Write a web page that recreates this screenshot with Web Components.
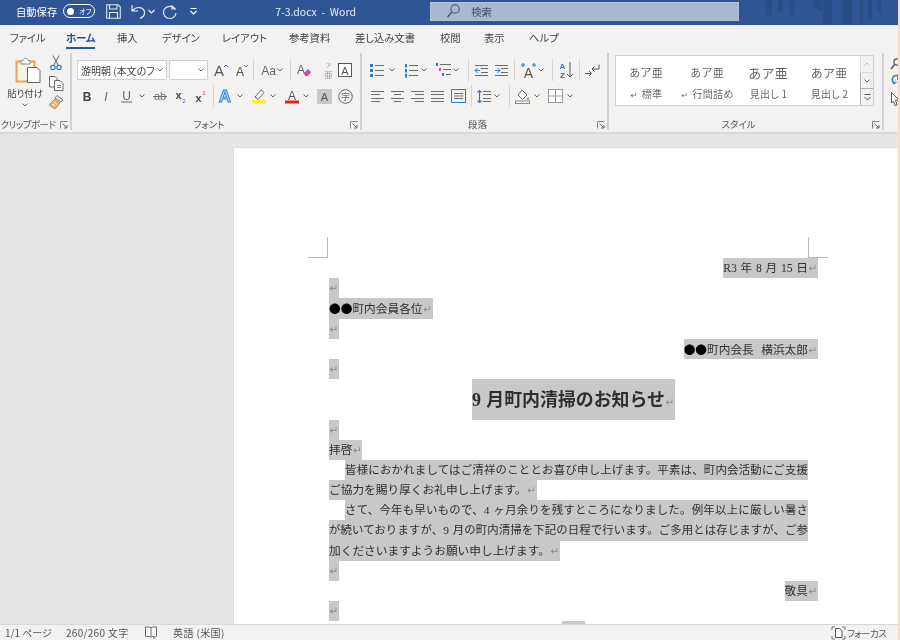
<!DOCTYPE html>
<html lang="ja">
<head>
<meta charset="utf-8">
<title>7-3.docx - Word</title>
<style>
  html, body { margin: 0; height: 100%; overflow: hidden; background: #f8dcc6; }
  body { font-family: "Noto Sans CJK JP", sans-serif; }
  .dot { font-family: "Noto Sans CJK JP", sans-serif; color: #000; }
</style>
</head>
<body>
<word-app>
  <title-bar></title-bar>
  <ribbon-tabs></ribbon-tabs>
  <word-ribbon></word-ribbon>
  <doc-area>
    <doc-page>
      <doc-line align="right">R3 年 8 月 15 日</doc-line>
      <doc-line></doc-line>
      <doc-line><span class="dot">●●</span>町内会員各位</doc-line>
      <doc-line></doc-line>
      <doc-line align="right"><span class="dot">●●</span>町内会長&nbsp;&nbsp;横浜太郎</doc-line>
      <doc-line></doc-line>
      <doc-line align="center" big>9 月町内清掃のお知らせ</doc-line>
      <doc-line></doc-line>
      <doc-line>拝啓</doc-line>
      <doc-line fill indent nomark>皆様におかれましてはご清祥のこととお喜び申し上げます。平素は、町内会活動にご支援</doc-line>
      <doc-line>ご協力を賜り厚くお礼申し上げます。</doc-line>
      <doc-line fill indent nomark>さて、今年も早いもので、4 ヶ月余りを残すところになりました。例年以上に厳しい暑さ</doc-line>
      <doc-line fill nomark>が続いておりますが、9 月の町内清掃を下記の日程で行います。ご多用とは存じますが、ご参</doc-line>
      <doc-line>加くださいますようお願い申し上げます。</doc-line>
      <doc-line></doc-line>
      <doc-line align="right">敬具</doc-line>
      <doc-line></doc-line>
      <doc-line align="center" nomark>　　</doc-line>
    </doc-page>
  </doc-area>
  <status-bar></status-bar>
</word-app>

<script>
const UI_FONT = '"Noto Sans CJK JP", sans-serif'
const G = '#6c6c6c'
const B = '#2b7cd3'
const line = (x1, y1, x2, y2, c = G, w = 1) => `<path d="M${x1} ${y1}L${x2} ${y2}" stroke="${c}" stroke-width="${w}" fill="none"/>`
const hl = (x1, x2, ys, c = G) => ys.map(y => line(x1, y, x2, y, c)).join('')
const txt = (x, y, s, t, attrs = '') => `<text x="${x}" y="${y}" font-size="${s}" font-family="Liberation Sans" text-anchor="middle" ${attrs}>${t}</text>`

// name: [width, height, svg]
const ICONS = {
  chev: [6, 4, `<path d="M.5 .5L3 3L5.5 .5" fill="none" stroke="#666" stroke-width="1"/>`],
  cut: [12, 16, `<path d="M3 .5L8 10M9 .5L4 10" stroke="#666" fill="none"/><circle cx="3" cy="12.5" r="2.2" fill="none" stroke="${B}" stroke-width="1.2"/><circle cx="9" cy="12.5" r="2.2" fill="none" stroke="${B}" stroke-width="1.2"/>`],
  copy: [15, 15, `<path d="M.5 .5H6L8 2.5V11H.5Z" fill="#fff" stroke="#666"/><path d="M5.5 4.5H11L14 7.5V14.5H5.5Z" fill="#fff" stroke="#666"/>${hl(8, 12, [9.5, 11.5], '#777')}`],
  painter: [16, 15, `<path d="M9 .5L15 5L13 7L7 3Z" fill="#eee" stroke="#777"/><path d="M7 4L12 8L7 14L1 10Z" fill="#f0b062" stroke="#dc8a2f"/><path d="M4 9L7 11M6 7L9 9.5" stroke="#fff"/>`],
  paste: [26, 26, `<rect x="1.5" y="4.5" width="18" height="20" fill="#f7f3ec" stroke="#e5a35a" stroke-width="2"/><path d="M6 3.5H8C8 .5 13 .5 13 3.5H15V7H6Z" fill="#fff" stroke="#8a8a8a"/><path d="M12.5 10.5H22L25 13.5V25.5H12.5Z" fill="#fff" stroke="#666"/>`],
  launcher: [8, 8, `<path d="M.5 7.5V.5H7.5" fill="none" stroke="#888"/><path d="M2.5 2.5L7 7M7 4V7H4" fill="none" stroke="#666"/>`],
  growA: [15, 14, `${txt(6, 13, 15, 'A', 'fill="#555"')}<path d="M11 4L13 2L15 4" fill="none" stroke="${B}"/>`],
  shrinkA: [14, 14, `${txt(6, 13, 12, 'A', 'fill="#555"')}<path d="M10 2L12 4L14 2" fill="none" stroke="${B}"/>`],
  aa: [17, 14, `${txt(8.5, 12, 12, 'Aa', 'fill="#666"')}`],
  clear: [16, 16, `${txt(5, 12, 12, 'A', 'fill="#666"')}<path d="M8 11L12 7L15 10L12 14H9Z" fill="#d04a9c"/>`],
  ruby: [13, 17, `<text x="6.5" y="4.5" font-size="5" text-anchor="middle" fill="#777" font-family="Noto Sans CJK JP">ア</text><text x="6.5" y="16" font-size="8.5" text-anchor="middle" fill="#999" font-family="Noto Sans CJK JP">亜</text>`],
  boxA: [14, 14, `<rect x=".5" y=".5" width="13" height="13" fill="#fff" stroke="#555"/>${txt(7, 11.5, 11, 'A', 'fill="#555"')}`],
  bold: [10, 12, txt(5, 11, 12, 'B', 'fill="#444" font-weight="bold"')],
  italic: [10, 12, txt(5, 11, 12, 'I', 'fill="#666" font-style="italic" font-family="Liberation Serif"')],
  under: [11, 14, `${txt(5.5, 10.5, 12, 'U', 'fill="#666"')}${line(0, 13, 11, 13)}`],
  strike: [14, 12, `${txt(7, 10, 11, 'ab', 'fill="#777"')}${line(0, 6.5, 14, 6.5)}`],
  sub: [12, 13, `${txt(4.5, 9, 11, 'x', 'fill="#444" font-weight="bold"')}${txt(10, 13, 6, '2', `fill="${B}"`)}`],
  sup: [12, 13, `${txt(4.5, 12, 11, 'x', 'fill="#444" font-weight="bold"')}${txt(10, 5, 6, '2', `fill="#d04a9c"`)}`],
  effectA: [14, 14, txt(7, 13, 17, 'A', `fill="#bcd8f2" stroke="${B}" stroke-width=".9" font-weight="bold"`)],
  marker: [14, 14, `<path d="M3 8L9 1L12 3.5L6 10.5Z" fill="#fff" stroke="#666"/><rect y="11" width="14" height="3.5" fill="#f6ef3c"/>`],
  colorA: [14, 15, `${txt(7, 10.5, 12, 'A', 'fill="#555"')}<rect y="11.5" width="14" height="3" fill="#e81f24"/>`],
  shadeA: [15, 15, `<rect width="15" height="15" fill="#c9c9c9"/>${txt(7.5, 12, 11, 'A', 'fill="#555"')}`],
  circled: [15, 15, `<circle cx="7.5" cy="7.5" r="6.8" fill="none" stroke="#666"/><text x="7.5" y="11" font-size="9" text-anchor="middle" fill="#666" font-family="Noto Sans CJK JP">字</text>`],
  bullets: [14, 13, `${[1.5, 6.5, 11.5].map(y => `<rect x="0" y="${y - 1.5}" width="3" height="3" fill="${B}"/>`).join('')}${hl(5, 14, [1.5, 6.5, 11.5])}`],
  numbers: [14, 13, `${[2, 7, 12].map(y => `<rect x="1" y="${y - 2}" width="2" height="3.5" fill="${B}"/>`).join('')}${hl(5, 14, [1.5, 6.5, 11.5])}`],
  multi: [15, 14, `<rect x="0" y="0" width="2" height="3" fill="${B}"/><rect x="3" y="5" width="2" height="3" fill="#d04a9c"/><rect x="6" y="10" width="2" height="3" fill="${B}"/>${line(4, 1.5, 15, 1.5)}${line(7, 6.5, 15, 6.5)}${line(10, 11.5, 15, 11.5)}`],
  outdent: [13, 11, `${hl(0, 13, [.5, 10.5])}${hl(6, 13, [3.5, 7.5])}<path d="M0 5.5H5M2.5 3L0 5.5L2.5 8" fill="none" stroke="${B}"/>`],
  indent: [13, 11, `${hl(0, 13, [.5, 10.5])}${hl(6, 13, [3.5, 7.5])}<path d="M0 5.5H5M2.5 3L5 5.5L2.5 8" fill="none" stroke="${B}"/>`],
  asian: [17, 15, `${txt(8.5, 14.5, 14, 'A', 'fill="#555"')}<path d="M1 2H5M3 0V4M12 2H16M14 0V4" stroke="${B}" stroke-width="1.2"/>`],
  sort: [15, 16, `${txt(4.5, 7, 8, 'A', `fill="${B}" font-weight="bold"`)}${txt(4.5, 15.5, 8, 'Z', 'fill="#555" font-weight="bold"')}<path d="M12 0V15M9 12L12 15L15 12" stroke="#555" fill="none"/>`],
  ltr: [15, 13, `<path d="M14 .5V5H7M9.5 2.5L7 5L9.5 7.5" stroke="#555" fill="none"/><path d="M0 9.5H6M4 7L6.5 9.5L4 12" stroke="#555" fill="none"/>`],
  alignL: [13, 11, hl(0, 13, [.5, 7.5]) + hl(0, 9, [3.5, 10.5])],
  alignC: [13, 11, hl(0, 13, [.5, 7.5]) + hl(3, 10, [3.5, 10.5])],
  alignR: [13, 11, hl(0, 13, [.5, 7.5]) + hl(4, 13, [3.5, 10.5])],
  justify: [13, 11, hl(0, 13, [.5, 3.5, 7.5, 10.5])],
  dist: [15, 14, `<path d="M.5 0V14M14.5 0V14" stroke="${B}"/>` + hl(1, 14, [.5, 13.5], B) + hl(3, 12, [4.5, 7, 9.5])],
  spacing: [14, 13, `<path d="M2.5 0V13M.5 2.5L2.5 .5L4.5 2.5M.5 10.5L2.5 12.5L4.5 10.5" fill="none" stroke="${B}" stroke-width="1.2"/>${hl(6, 14, [1.5, 4.5, 8.5, 11.5])}`],
  shade: [15, 15, `<path d="M7 1L12 6L7.5 10.5L3 6Z" fill="#fff" stroke="#666"/><path d="M13 8C14.5 10 14 11 13 11S11.5 10 13 8Z" fill="#59a14f"/><rect x=".5" y="12" width="14" height="2.5" fill="#fff" stroke="#888"/>`],
  borders: [15, 14, `<rect x=".5" y=".5" width="14" height="13" fill="#fff" stroke="#999"/><path d="M7.5 .5V13.5M.5 7H14.5" stroke="#999"/>`],
  find: [9, 12, `<circle cx="6" cy="4" r="3.2" fill="none" stroke="#555" stroke-width="1.2"/><path d="M3.5 6.5L0 11" stroke="#555" stroke-width="1.5"/>`],
  replace: [9, 14, `<path d="M6 1.5C1 1 0 7 3 9M1 7L3 9.5L5.5 8" fill="none" stroke="${B}" stroke-width="1.4"/><rect x="6" y="0" width="3" height="6" fill="#b06ac0"/>`],
  cursor: [9, 14, `<path d="M.5 .5L8 8H4.5L6 13L4 13.5L2.5 9L.5 11Z" fill="#fff" stroke="#555"/>`],
  save: [15, 15, `<path d="M.7 .7H12L14.3 3V14.3H.7Z" fill="none" stroke="#dfe6f1" stroke-width="1.1"/><path d="M3.5 .7V5H11V.7M3.5 14.3V8.5H11.5V14.3" fill="none" stroke="#dfe6f1" stroke-width="1.1"/>`],
  undo: [15, 15, `<path d="M1 1V7H7M1.5 6.8C5 2 12.5 2.5 13.5 8C14 11 12 13 9 14.5" fill="none" stroke="#e7ecf5" stroke-width="1.2"/>`],
  redo: [15, 15, `<path d="M10 1V5H14M13 4.5C9 .5 2.5 2.5 1.5 7.5C1 11 4 14.5 7.5 14.5C11 14.5 13.5 12 14 9" fill="none" stroke="#e7ecf5" stroke-width="1.2"/>`],
  chevW: [7, 5, `<path d="M.5 1L3.5 4L6.5 1" fill="none" stroke="#fff" stroke-width="1.1"/>`],
  qat: [7, 7, `<path d="M.5 .5H6.5M.5 3L3.5 6L6.5 3" fill="none" stroke="#fff" stroke-width="1.1"/>`],
  more: [7, 7, `<path d="M.5 .5H6.5M.5 3L3.5 6L6.5 3" fill="none" stroke="#555" stroke-width="1"/>`],
  search: [13, 14, `<circle cx="8" cy="5" r="4.2" fill="none" stroke="#3d4e68" stroke-width="1.1"/><path d="M5 8L.5 13" stroke="#3d4e68" stroke-width="1.2"/>`],
  book: [12, 13, `<path d="M.5 1H5L6 2L7 1H11.5V10L9 12.5V10.5H7L6 11.5L5 10.5H.5ZM6 2V11" fill="#fff" stroke="#666"/>`],
  focus: [13, 14, `<path d="M0 4V1H3M10 1H13V4M0 10V13H3M10 13H13V10" fill="none" stroke="#777"/><path d="M3.5 2.5H7.5L10 5V11.5H3.5Z" fill="#fff" stroke="#555"/>`]
}

// small svg icon in a fixed width cell
class RIcon extends HTMLElement {
  constructor() {
    super()
    this.attachShadow({ mode: 'open' })
  }

  connectedCallback() {
    const [w, h, body] = ICONS[this.getAttribute('name')]
    const cell = this.getAttribute('w') || w
    const ml = this.getAttribute('ml') || 0
    this.shadowRoot.innerHTML = `
      <style>
        :host {
          display: flex;
          flex: none;
          align-items: center;
          justify-content: center;
          width: ${cell}px;
          margin-left: ${ml}px;
        }
        svg { display: block; overflow: visible; }
      </style>
      <svg width="${w}" height="${h}" viewBox="0 0 ${w} ${h}">${body}</svg>
    `
  }
}

class RSep extends HTMLElement {
  constructor() {
    super()
    this.attachShadow({ mode: 'open' })
  }

  connectedCallback() {
    this.shadowRoot.innerHTML = `
      <style>
        :host {
          display: block;
          flex: none;
          width: 1px;
          height: ${this.getAttribute('h') || 22}px;
          margin-left: ${this.getAttribute('ml') || 0}px;
          background: #d6d4d2;
        }
      </style>
    `
  }
}

class RibbonGroup extends HTMLElement {
  constructor() {
    super()
    this.attachShadow({ mode: 'open' })
  }

  connectedCallback() {
    this.shadowRoot.innerHTML = `
      <style>
        :host {
          position: relative;
          display: flex;
          flex-direction: column;
          flex: none;
          box-sizing: border-box;
          width: ${this.getAttribute('w')}px;
          height: 82px;
          padding-top: ${this.getAttribute('pt') || 10}px;
          padding-left: ${this.getAttribute('pl') || 0}px;
        }
        .label {
          position: absolute;
          left: 0;
          right: 14px;
          bottom: 0;
          height: 15px;
          line-height: 15px;
          text-align: center;
          font-size: 9.5px;
          letter-spacing: ${this.getAttribute('ls') || 0}px;
          color: #555;
          white-space: nowrap;
          font-feature-settings: "palt";
        }
        r-icon {
          position: absolute;
          right: 2px;
          bottom: 3px;
        }
      </style>
      <slot></slot>
      <div class="label">${this.getAttribute('label')}</div>
      <r-icon name="launcher"></r-icon>
    `
  }
}

class RRow extends HTMLElement {
  constructor() {
    super()
    this.attachShadow({ mode: 'open' })
    this.shadowRoot.innerHTML = `
      <style>
        :host {
          display: flex;
          align-items: center;
          height: 20px;
          margin-bottom: 6px;
        }
      </style>
      <slot></slot>
    `
  }
}

class FontBox extends HTMLElement {
  constructor() {
    super()
    this.attachShadow({ mode: 'open' })
  }

  connectedCallback() {
    this.shadowRoot.innerHTML = `
      <style>
        :host {
          display: flex;
          flex: none;
          align-items: center;
          box-sizing: border-box;
          width: ${this.getAttribute('w')}px;
          height: 20px;
          margin-left: ${this.getAttribute('ml') || 0}px;
          padding: 0 3px;
          background: #fff;
          border: 1px solid #d2d0ce;
          font-size: 10px;
          color: #444;
          white-space: nowrap;
          font-feature-settings: "palt";
        }
        span { flex: 1; min-width: 0; overflow: hidden; margin-right: 3px; }
      </style>
      <span><slot></slot></span>
      <r-icon name="chev"></r-icon>
    `
  }
}

class StyleItem extends HTMLElement {
  constructor() {
    super()
    this.attachShadow({ mode: 'open' })
  }

  connectedCallback() {
    const mark = this.hasAttribute('mark') ? '<b>↵</b>' : ''
    this.shadowRoot.innerHTML = `
      <style>
        :host {
          display: flex;
          flex-direction: column;
          align-items: center;
          width: 61px;
          color: #666;
          font-size: 10px;
          font-feature-settings: "palt";
        }
        .top {
          height: 25px;
          line-height: 25px;
          font-size: ${this.getAttribute('size') || 11}px;
          margin-top: 4px;
          letter-spacing: .8px;
          white-space: nowrap;
        }
        .name { line-height: 17px; white-space: nowrap; letter-spacing: .3px; }
        b { font-weight: 400; font-size: 8px; margin-right: 4px; font-family: "DejaVu Sans", sans-serif; }
      </style>
      <div class="top">あア亜</div>
      <div class="name">${mark}<slot></slot></div>
    `
  }
}

class StyleGallery extends HTMLElement {
  constructor() {
    super()
    this.attachShadow({ mode: 'open' })
    this.shadowRoot.innerHTML = `
      <style>
        :host {
          display: flex;
          box-sizing: border-box;
          width: 259px;
          height: 51px;
          margin: 5px 0 0 6px;
          background: #fff;
          border: 1px solid #d2d0ce;
        }
        .items { display: flex; flex: 1; }
        .scroll {
          display: flex;
          flex-direction: column;
          flex: none;
          width: 13px;
          background: #f3f2f1;
        }
        .scroll div {
          display: flex;
          flex: 1;
          align-items: center;
          justify-content: center;
          border: 1px solid #b0aeac;
          border-width: 0 0 1px 1px;
        }
        .scroll div:first-child { border-color: #dcdad8; }
        .scroll div:first-child r-icon { opacity: .35; transform: scaleY(-1); }
        .scroll div:last-child { border-bottom: 0; }
      </style>
      <div class="items"><slot></slot></div>
      <div class="scroll">
        <div><r-icon name="chev"></r-icon></div>
        <div><r-icon name="chev"></r-icon></div>
        <div><r-icon name="more"></r-icon></div>
      </div>
    `
  }
}

class WordRibbon extends HTMLElement {
  constructor() {
    super()
    this.attachShadow({ mode: 'open' })
    this.shadowRoot.innerHTML = `
      <style>
        :host {
          display: flex;
          flex: none;
          height: 82px;
          background: #f3f2f1;
          overflow: hidden;
          color: #444;
          border-bottom: 2px solid #d9d9d9;
          box-sizing: content-box;
        }
        .vsep { flex: none; width: 2px; height: 77px; margin-top: 3px; background: #d2d0ce; }
        .clip { display: flex; }
        .paste { display: flex; flex-direction: column; align-items: center; width: 50px; }
        .paste span { font-size: 9.4px; margin-top: 2px; line-height: 16px; white-space: nowrap; font-feature-settings: "palt"; }
        .paste r-icon { margin-top: 2px; }
        .paste r-icon.big { margin: 0 0 0 5px; }
        .small { display: flex; flex-direction: column; width: 14px; gap: 4.5px; margin: -2px 0 0 -2px; }
        .tools { display: flex; flex-direction: column; gap: 4px; padding: 8px 0 0 7px; }
      </style>

      <ribbon-group w="70" label="クリップボード" pt="7" ls="-.5">
        <div class="clip">
          <div class="paste">
            <r-icon class="big" name="paste" w="36"></r-icon>
            <span>貼り付け</span>
            <r-icon name="chev"></r-icon>
          </div>
          <div class="small">
            <r-icon name="cut" w="16"></r-icon>
            <r-icon name="copy" w="16"></r-icon>
            <r-icon name="painter" w="16"></r-icon>
          </div>
        </div>
      </ribbon-group>
      <div class="vsep"></div>

      <ribbon-group w="288" label="フォント" pl="5">
        <r-row>
          <font-box w="90">游明朝 (本文のフォント)</font-box>
          <font-box w="39" ml="2"></font-box>
          <r-icon name="growA" w="24"></r-icon>
          <r-icon name="shrinkA" w="18"></r-icon>
          <r-sep ml="3"></r-sep>
          <r-icon name="aa" w="16" ml="6"></r-icon>
          <r-icon name="chev" w="7"></r-icon>
          <r-sep ml="7"></r-sep>
          <r-icon name="clear" w="15" ml="5"></r-icon>
          <r-icon name="ruby" w="13" ml="11"></r-icon>
          <r-icon name="boxA" w="14" ml="3"></r-icon>
        </r-row>
        <r-row>
          <r-icon name="bold" w="20"></r-icon>
          <r-icon name="italic" w="18"></r-icon>
          <r-icon name="under" w="22"></r-icon>
          <r-icon name="chev" w="10"></r-icon>
          <r-icon name="strike" w="26"></r-icon>
          <r-icon name="sub" w="14"></r-icon>
          <r-icon name="sup" w="26"></r-icon>
          <r-sep></r-sep>
          <r-icon name="effectA" w="21"></r-icon>
          <r-icon name="chev" w="10"></r-icon>
          <r-icon name="marker" w="18" ml="5"></r-icon>
          <r-icon name="chev" w="10"></r-icon>
          <r-icon name="colorA" w="18" ml="5"></r-icon>
          <r-icon name="chev" w="10"></r-icon>
          <r-icon name="shadeA" w="15" ml="6"></r-icon>
          <r-icon name="circled" w="14" ml="6"></r-icon>
        </r-row>
      </ribbon-group>
      <div class="vsep"></div>

      <ribbon-group w="245" label="段落" pl="5">
        <r-row>
          <r-icon name="bullets" w="16" ml="2"></r-icon>
          <r-icon name="chev" w="10" ml="2"></r-icon>
          <r-icon name="numbers" w="15" ml="6"></r-icon>
          <r-icon name="chev" w="10" ml="1"></r-icon>
          <r-icon name="multi" w="15" ml="7"></r-icon>
          <r-icon name="chev" w="10"></r-icon>
          <r-sep ml="7"></r-sep>
          <r-icon name="outdent" w="13" ml="6"></r-icon>
          <r-icon name="indent" w="13" ml="7"></r-icon>
          <r-sep ml="6"></r-sep>
          <r-icon name="asian" w="17" ml="5"></r-icon>
          <r-icon name="chev" w="8"></r-icon>
          <r-sep ml="7"></r-sep>
          <r-icon name="sort" w="14" ml="5"></r-icon>
          <r-sep ml="7"></r-sep>
          <r-icon name="ltr" w="15" ml="5"></r-icon>
        </r-row>
        <r-row>
          <r-icon name="alignL" w="13" ml="4"></r-icon>
          <r-icon name="alignC" w="13" ml="7"></r-icon>
          <r-icon name="alignR" w="13" ml="7"></r-icon>
          <r-icon name="justify" w="13" ml="7"></r-icon>
          <r-icon name="dist" w="15" ml="7"></r-icon>
          <r-sep ml="5"></r-sep>
          <r-icon name="spacing" w="14" ml="5"></r-icon>
          <r-icon name="chev" w="10" ml="1"></r-icon>
          <r-sep ml="7"></r-sep>
          <r-icon name="shade" w="15" ml="5"></r-icon>
          <r-icon name="chev" w="10" ml="2"></r-icon>
          <r-icon name="borders" w="15" ml="6"></r-icon>
          <r-icon name="chev" w="10" ml="2"></r-icon>
        </r-row>
      </ribbon-group>
      <div class="vsep"></div>

      <ribbon-group w="273" label="スタイル" pt="0">
        <style-gallery>
          <style-item mark>標準</style-item>
          <style-item mark>行間詰め</style-item>
          <style-item size="13">見出し 1</style-item>
          <style-item size="12">見出し 2</style-item>
        </style-gallery>
      </ribbon-group>
      <div class="vsep"></div>

      <div class="tools">
        <r-icon name="find"></r-icon>
        <r-icon name="replace"></r-icon>
        <r-icon name="cursor"></r-icon>
      </div>
    `
  }
}

class TitleBar extends HTMLElement {
  constructor() {
    super()
    this.attachShadow({ mode: 'open' })
    this.shadowRoot.innerHTML = `
      <style>
        :host {
          position: relative;
          display: flex;
          flex: none;
          align-items: center;
          box-sizing: border-box;
          height: 25px;
          padding: 0 0 3px 16px;
          background: #2f5597;
          color: #fff;
          font-size: 10.3px;
          white-space: nowrap;
        }
        .toggle {
          display: flex;
          flex: none;
          align-items: center;
          box-sizing: border-box;
          width: 32px;
          height: 14px;
          margin-left: 6px;
          padding-left: 3px;
          border: 1px solid #fff;
          border-radius: 7px;
          font-size: 7px;
          font-feature-settings: "palt";
        }
        .toggle i { width: 7px; height: 7px; margin-right: 5px; border-radius: 50%; background: #fff; }
        .name { flex: none; width: 90px; margin-left: 78px; font-size: 10.5px; color: #e8edf5; }
        .search {
          display: flex;
          flex: none;
          align-items: center;
          box-sizing: border-box;
          width: 309px;
          height: 19px;
          margin-left: 65px;
          padding-left: 16px;
          background: #a8b8d2;
          border: 1px solid #b5c3d9;
          color: #3d4e68;
        }
        .search span { margin-left: 11px; }
        svg.bars { position: absolute; left: 760px; top: 0; }
      </style>
      <span>自動保存</span>
      <div class="toggle"><i></i>オフ</div>
      <r-icon name="save" ml="11"></r-icon>
      <r-icon name="undo" ml="10"></r-icon>
      <r-icon name="chevW" ml="2"></r-icon>
      <r-icon name="redo" ml="7"></r-icon>
      <r-icon name="qat" ml="13"></r-icon>
      <span class="name">7-3.docx&nbsp; - &nbsp;Word</span>
      <div class="search"><r-icon name="search"></r-icon><span>検索</span></div>
      <svg class="bars" width="138" height="24" fill="#2a4d88">
        <path d="M6 0h6v15H6zM18 0h5v12h-5zM30 0h4v15h-4zM44 0h10v8l8 4v-12zM63 0h9v24H63zM82 0h10v24H82zM100 0h3v24h-3zM108 0h4v20h-4zM118 0h3v12h-3z"/>
      </svg>
    `
  }
}

class RibbonTabs extends HTMLElement {
  constructor() {
    super()
    this.attachShadow({ mode: 'open' })
    this.shadowRoot.innerHTML = `
      <style>
        :host {
          display: grid;
          grid-template-columns: 56px 51px 45px 60px 67px 66px 85px 44px 45px auto;
          flex: none;
          box-sizing: border-box;
          height: 25px;
          padding: 5px 0 0 10px;
          background: #f3f2f1;
          color: #444;
          font-size: 10.3px;
          line-height: 16px;
          white-space: nowrap;
          font-feature-settings: "palt";
        }
        .on { justify-self: start; height: 17px; font-weight: 700; color: #2b4f88; border-bottom: 2px solid #2b579a; }
      </style>
      <span>ファイル</span><span class="on">ホーム</span><span>挿入</span><span>デザイン</span>
      <span>レイアウト</span><span>参考資料</span><span>差し込み文書</span><span>校閲</span><span>表示</span><span>ヘルプ</span>
    `
  }
}

class DocArea extends HTMLElement {
  constructor() {
    super()
    this.attachShadow({ mode: 'open' })
    this.shadowRoot.innerHTML = `
      <style>
        :host {
          display: block;
          flex: 1;
          min-height: 0;
          overflow: hidden;
          box-sizing: border-box;
          padding: 13px 0 0 233px;
          background: #e6e6e6;
        }
      </style>
      <slot></slot>
    `
  }
}

class DocPage extends HTMLElement {
  constructor() {
    super()
    this.attachShadow({ mode: 'open' })
    this.shadowRoot.innerHTML = `
      <style>
        :host {
          position: relative;
          display: block;
          box-sizing: border-box;
          padding: 110px 0 0 95px;
          width: 665px;
          background: #fff;
          border-left: 1px solid #dcdcdc;
          border-top: 1px solid #dcdcdc;
        }
        .wrap { width: 489px; }
        .mark { position: absolute; top: 89px; height: 20px; border-bottom: 1px solid #bbb; }
        .mark.l { left: 74px; border-right: 1px solid #bbb; width: 19px; }
        .mark.r { left: 574px; border-left: 1px solid #bbb; width: 19px; }
      </style>
      <div class="mark l"></div>
      <div class="mark r"></div>
      <div class="wrap"><slot></slot></div>
    `
  }
}

// one paragraph line with its grey selection and the return mark
class DocLine extends HTMLElement {
  constructor() {
    super()
    this.attachShadow({ mode: 'open' })
  }

  connectedCallback() {
    const align = { right: 'flex-end', center: 'center' }[this.getAttribute('align')] || 'flex-start'
    const big = this.hasAttribute('big')
    const fill = this.hasAttribute('fill')
    const indent = this.hasAttribute('indent') ? 16 : 0
    const mark = this.hasAttribute('nomark') ? '' : '<span class="ret">↵</span>'
    const size = big ? 17.9 : fill ? 11.4 : 11.7
    this.shadowRoot.innerHTML = `
      <style>
        :host {
          display: flex;
          justify-content: ${align};
          height: ${big ? 40.4 : 20.2}px;
          font-family: "Liberation Serif", "Noto Sans CJK JP", serif;
          font-size: ${size}px;
          font-weight: ${big ? 700 : 400};
          word-spacing: .8px;
          color: #2e2e2e;
        }
        .sel {
          display: block;
          box-sizing: border-box;
          margin-left: ${indent}px;
          ${fill ? `width: ${479 - indent}px;` : ''}
          ${big ? 'padding-top: 1.5px;' : ''}
          line-height: ${big ? 38.9 : 20.2}px;
          background: #c8c8c8;
          white-space: nowrap;
          ${fill ? 'text-align: justify; text-align-last: justify; white-space: normal;' : ''}
        }
        .ret {
          display: inline-block;
          width: 10px;
          text-align: center;
          font-family: "DejaVu Sans", sans-serif;
          font-size: 10.5px;
          font-weight: 400;
          color: #8a8a8a;
        }
      </style>
      <div class="sel"><slot></slot>${mark}</div>
    `
  }
}

class StatusBar extends HTMLElement {
  constructor() {
    super()
    this.attachShadow({ mode: 'open' })
    this.shadowRoot.innerHTML = `
      <style>
        :host {
          display: flex;
          flex: none;
          align-items: center;
          box-sizing: border-box;
          height: 16px;
          padding-left: 5px;
          background: #f3f2f1;
          border-top: 1px solid #d9d9d9;
          color: #555;
          font-size: 10px;
          white-space: nowrap;
          font-feature-settings: "palt";
        }
        .a { width: 61px; }
        .b { width: 79px; letter-spacing: .3px; }
        .c { margin-left: 16px; letter-spacing: .4px; }
        .e { width: 51px; margin-left: 2px; font-size: 9.5px; letter-spacing: -.6px; }
        .spacer { flex: 1; }
      </style>
      <span class="a">1/1 ページ</span>
      <span class="b">260/260 文字</span>
      <r-icon name="book" w="12"></r-icon>
      <span class="c">英語 (米国)</span>
      <div class="spacer"></div>
      <r-icon name="focus"></r-icon>
      <span class="e">フォーカス</span>
    `
  }
}

class WordApp extends HTMLElement {
  constructor() {
    super()
    this.attachShadow({ mode: 'open' })
    this.shadowRoot.innerHTML = `
      <style>
        :host {
          display: flex;
          flex-direction: column;
          width: 898px;
          height: 640px;
          font-family: ${UI_FONT};
          filter: blur(.35px);
        }
      </style>
      <slot></slot>
    `
  }
}

customElements.define('r-icon', RIcon)
customElements.define('r-sep', RSep)
customElements.define('r-row', RRow)
customElements.define('font-box', FontBox)
customElements.define('ribbon-group', RibbonGroup)
customElements.define('style-item', StyleItem)
customElements.define('style-gallery', StyleGallery)
customElements.define('word-ribbon', WordRibbon)
customElements.define('title-bar', TitleBar)
customElements.define('ribbon-tabs', RibbonTabs)
customElements.define('doc-line', DocLine)
customElements.define('doc-page', DocPage)
customElements.define('doc-area', DocArea)
customElements.define('status-bar', StatusBar)
customElements.define('word-app', WordApp)
</script>
</body>
</html>
